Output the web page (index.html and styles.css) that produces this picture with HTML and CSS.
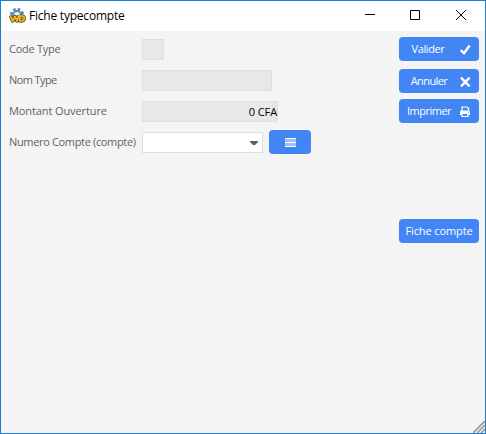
FILE: index.html
```html
<!DOCTYPE html>
<html lang="fr">
<head>
<meta charset="utf-8">
<title>Fiche typecompte</title>
<link rel="stylesheet" href="styles.css">
</head>
<body>
<div class="window">
  <header class="titlebar">
    <svg class="app-icon" width="17" height="16" viewBox="0 0 17 16">
      <circle cx="8" cy="7" r="5.6" fill="none" stroke="#4585b8" stroke-width="3" stroke-dasharray="2.4 2"/>
      <circle cx="8" cy="7" r="4" fill="#e8f1f7" stroke="#5591c0" stroke-width="2"/>
      <path d="M1.3 7.5 3.6 13 6 8.5 8 13 9.7 7.5M10.8 8.2V13H12.5Q15.3 12.7 15.3 10.3T12.5 8H10.5" fill="none" stroke="#64501c" stroke-width="3.4" stroke-linejoin="round"/>
      <path d="M1.3 7.5 3.6 13 6 8.5 8 13 9.7 7.5M10.8 8.2V13H12.5Q15.3 12.7 15.3 10.3T12.5 8H10.5" fill="none" stroke="#f2bd24" stroke-width="1.7" stroke-linejoin="round"/>
    </svg>
    <h1 class="title">Fiche typecompte</h1>
    <div class="controls">
      <svg class="minimize" width="10" height="10" viewBox="0 0 10 10"><path d="M0 4.5H10" stroke="#000"/></svg>
      <svg width="10" height="10" viewBox="0 0 10 10"><path d="M.5.5h9v9h-9z" fill="none" stroke="#000"/></svg>
      <svg width="10" height="10" viewBox="0 0 10 10"><path d="M0 0 10 10M10 0 0 10" stroke="#000"/></svg>
    </div>
  </header>
  <main class="content">
    <div class="form">
      <div class="row"><label class="label label-code">Code Type</label><div class="field field-code"></div></div>
      <div class="row"><label class="label label-name">Nom Type</label><div class="field field-name"></div></div>
      <div class="row"><label class="label label-amount">Montant Ouverture</label><div class="field field-amount">0 CFA</div></div>
      <div class="row">
        <label class="label label-account">Numero Compte (compte)</label>
        <div class="field combo"><svg width="8" height="4" viewBox="0 0 8 4"><path d="M0 0H8V1L5 4H3L0 1Z" fill="#5c5f62"/></svg></div>
        <button class="list-button"><svg width="11" height="9" viewBox="0 0 11 9"><path fill="#9dc0fa" d="M0 0h11v9H0z"/><path d="M0 .5H11M0 4.5H11M0 8.5H11" stroke="#fff"/></svg></button>
      </div>
    </div>
    <div class="actions">
      <button class="button"><span class="text t-valider">Valider</span><svg class="icon" width="12" height="12" viewBox="0 0 12 12"><path d="M1.8 6.2 5 9.2 10.6 1.6" fill="none" stroke="#fff" stroke-width="2.5"/></svg></button>
      <button class="button annuler"><span class="text t-annuler">Annuler</span><svg class="icon" width="12" height="12" viewBox="0 0 12 12"><path d="M2 1.7 10.6 10.3M10.6 1.7 2 10.3" stroke="#fff" stroke-width="2.4"/></svg></button>
      <button class="button imprimer"><span class="text t-imprimer">Imprimer</span><svg class="icon" width="12" height="12" viewBox="0 0 12 12"><path d="M3 5V1H8L9.5 2.5V5" fill="none" stroke="#fff" stroke-width="1.2"/><path d="M2 4.5H10L11 5.5V9H1V5.5Z" fill="#fff"/><path d="M3 7.5H9V10.5H3Z" fill="#4285f4" stroke="#fff" stroke-width="1.2"/><path d="M9 6H10" stroke="#4285f4"/></svg></button>
      <button class="button compte"><span class="text t-compte">Fiche compte</span></button>
    </div>
  </main>
  <svg class="grip" width="12" height="12" viewBox="0 0 12 12"><path d="M0 12 12 0M4 12 12 4M8 12 12 8" stroke="#999" stroke-width="1.6"/></svg>
</div>
</body>
</html>
```
FILE: styles.css
```css
* { box-sizing: border-box; }
body { margin: 0; font-family: "Open Sans", sans-serif; font-size: 11px; }
.window {
  position: relative;
  width: 486px;
  height: 434px;
  border: 1px solid #1a7fd4;
  background: #f4f4f4;
  overflow: hidden;
}
.titlebar { display: flex; align-items: center; height: 30px; padding: 0 19px 0 8px; background: #fff; }
.app-icon { margin-right: 3px; }
.title { margin: 0; font-size: 12px; font-weight: 400; line-height: 30px; color: #000; letter-spacing: -0.22px; white-space: nowrap; }
.controls { display: flex; gap: 36px; margin-left: auto; margin-top: -2px; }
.minimize { margin-right: -1px; }
.content { display: flex; justify-content: space-between; padding: 6px 6px 0 8px; }
.form { display: flex; flex-direction: column; gap: 7px; }
.row { display: flex; align-items: center; height: 24px; }
.label { width: 133px; flex: none; line-height: 24px; color: #5f6368; white-space: nowrap; }
.label-code { letter-spacing: -0.27px; }
.label-name { letter-spacing: -0.6px; }
.label-amount { letter-spacing: -0.1px; }
.label-account { letter-spacing: -0.34px; }
.field { height: 21px; border: 1px solid #dfdfdf; background: #e8e8e8; margin-top: 1px; }
.field-code { width: 22px; }
.field-name { width: 130px; }
.field-amount { width: 136px; line-height: 19px; text-align: right; color: #000; letter-spacing: -0.1px; }
.combo { display: flex; align-items: center; justify-content: flex-end; width: 121px; padding-right: 4px; background: #fff; }
button { border: 0; border-radius: 4px; background: #4285f4; color: #fff; font: inherit; padding: 0; }
.list-button { display: flex; align-items: center; justify-content: center; width: 42px; height: 24px; margin-left: 6px; }
.actions { display: flex; flex-direction: column; width: 80px; }
.button { display: flex; align-items: center; width: 80px; height: 24px; }
.text { flex: 1; text-align: center; white-space: nowrap; padding-bottom: 1px; }
.t-valider { letter-spacing: -0.4px; padding-right: 2px; }
.t-annuler { letter-spacing: -0.6px; }
.t-imprimer { letter-spacing: -0.5px; }
.t-compte { letter-spacing: -0.1px; }
.icon { flex: none; margin: 1px 8px 0 0; }
.annuler { margin-top: 8px; }
.imprimer { margin-top: 6px; }
.compte { margin-top: 96px; }
.grip { position: absolute; right: 0; bottom: 0; }
```
